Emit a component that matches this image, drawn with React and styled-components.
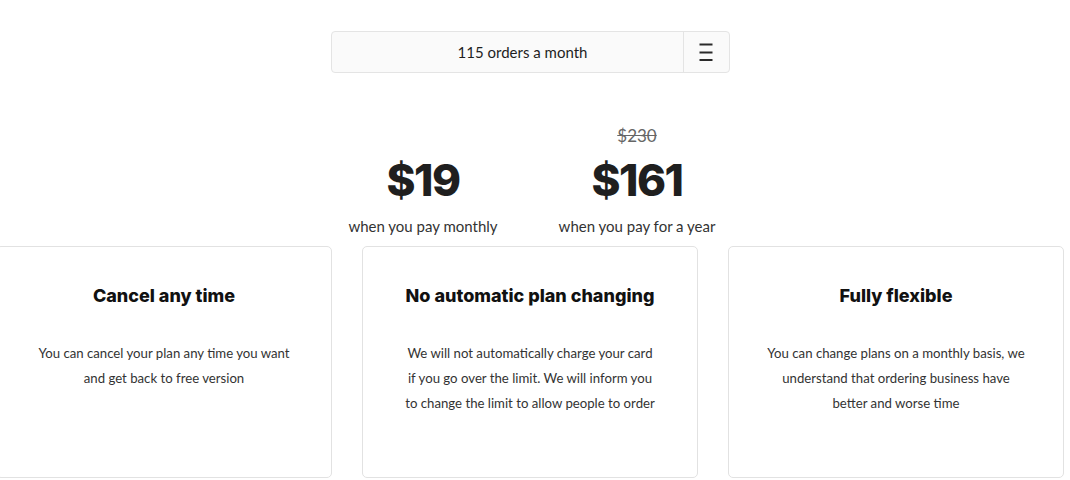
import React from 'react'
import styled, { createGlobalStyle } from 'styled-components'

const GlobalStyle = createGlobalStyle`
  html, body {
    margin: 0;
    padding: 0;
    background: #ffffff;
    overflow: hidden;
  }
  body {
    font-family: Lato, 'Open Sans', sans-serif;
    color: #222;
  }
`

const features = [
  {
    title: 'Cancel any time',
    lines: ['You can cancel your plan any time you want', 'and get back to free version'],
  },
  {
    title: 'No automatic plan changing',
    lines: [
      'We will not automatically charge your card',
      'if you go over the limit. We will inform you',
      'to change the limit to allow people to order',
    ],
  },
  {
    title: 'Fully flexible',
    lines: [
      'You can change plans on a monthly basis, we',
      'understand that ordering business have',
      'better and worse time',
    ],
  },
]

export default function App() {
  return (
    <>
      <GlobalStyle />
      <StyledPage>
        <StyledSelect>
          <StyledSelectValue>115 orders a month</StyledSelectValue>
          <StyledSelectToggle aria-label="open">
            <svg width="14" height="18" viewBox="0 0 14 18">
              <path d="M0.5 1.5h13M0.5 9.5h13M0.5 17h13" stroke="#2a2a2a" strokeWidth="1.8" />
            </svg>
          </StyledSelectToggle>
        </StyledSelect>

        <StyledPrices>
          <StyledPriceColumn>
            <StyledAmount>$19</StyledAmount>
            <StyledCaption>when you pay monthly</StyledCaption>
          </StyledPriceColumn>
          <StyledPriceColumn>
            <StyledOldPrice>$230</StyledOldPrice>
            <StyledAmount>$161</StyledAmount>
            <StyledCaption>when you pay for a year</StyledCaption>
          </StyledPriceColumn>
        </StyledPrices>

        <StyledCards>
          {features.map(({ title, lines }) => (
            <StyledCard key={title}>
              <StyledCardTitle>{title}</StyledCardTitle>
              <StyledCardText>
                {lines.map((line, i) => (
                  <React.Fragment key={line}>
                    {i > 0 && <br />}
                    {line}
                  </React.Fragment>
                ))}
              </StyledCardText>
            </StyledCard>
          ))}
        </StyledCards>
      </StyledPage>
    </>
  )
}

const StyledPage = styled.main`
  width: 1060px;
  display: flex;
  flex-direction: column;
  align-items: center;
  padding-top: 31px;
`

const StyledSelect = styled.div`
  width: 399px;
  height: 42px;
  box-sizing: border-box;
  display: flex;
  border: 1px solid #e4e4e4;
  border-radius: 4px;
  background: #fafafa;
`

const StyledSelectValue = styled.div`
  flex: 1;
  display: flex;
  align-items: center;
  justify-content: center;
  padding-left: 31px;
  font-size: 15px;
  color: #1e1e1e;
`

const StyledSelectToggle = styled.div`
  width: 45px;
  display: flex;
  align-items: center;
  justify-content: center;
  border-left: 1px solid #e4e4e4;
`

const StyledPrices = styled.section`
  display: flex;
  align-items: flex-end;
  margin-top: 53px;
`

const StyledPriceColumn = styled.div`
  width: 214px;
  display: flex;
  flex-direction: column;
  align-items: center;
`

const StyledOldPrice = styled.span`
  font-size: 17px;
  line-height: 20px;
  color: #666;
  text-decoration: line-through;
  margin-bottom: 8px;
`

const StyledAmount = styled.span`
  font-family: Inter, 'Open Sans', sans-serif;
  font-weight: 800;
  font-size: 44px;
  line-height: 52px;
  letter-spacing: -1.5px;
  color: #1f1f1f;
`

const StyledCaption = styled.span`
  margin-top: 10px;
  font-size: 15px;
  line-height: 20px;
  color: #333;
`

const StyledCards = styled.section`
  width: 1068px;
  flex-shrink: 0;
  display: grid;
  grid-template-columns: repeat(3, 1fr);
  gap: 30px;
  margin-top: 10px;
`

const StyledCard = styled.article`
  height: 232px;
  box-sizing: border-box;
  border: 1px solid #e2e2e2;
  border-radius: 5px;
  padding: 37px 20px 0;
  display: flex;
  flex-direction: column;
  align-items: center;
  text-align: center;
`

const StyledCardTitle = styled.h2`
  margin: 0;
  font-family: Inter, 'Open Sans', sans-serif;
  font-weight: 800;
  font-size: 18px;
  line-height: 24px;
  color: #111;
`

const StyledCardText = styled.p`
  margin: 33px 0 0;
  font-size: 13.2px;
  line-height: 25px;
  color: #333;
  white-space: nowrap;
`
